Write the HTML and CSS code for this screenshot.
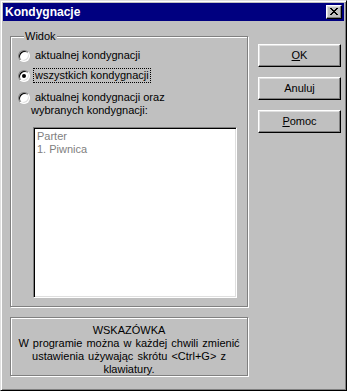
FILE: index.html
```html
<!DOCTYPE html>
<html lang="pl">
<head>
<meta charset="utf-8">
<title>Kondygnacje</title>
<link rel="stylesheet" href="styles.css">
</head>
<body>
<div class="window">
  <div class="titlebar">
    <span class="title">Kondygnacje</span>
    <span class="close"><svg width="8" height="7" viewBox="0 0 8 7"><path d="M0 0h2v1h-2zM6 0h2v1h-2zM1 1h2v1h-2zM5 1h2v1h-2zM2 2h4v1h-4zM3 3h2v1h-2zM2 4h4v1h-4zM1 5h2v1h-2zM5 5h2v1h-2zM0 6h2v1h-2zM6 6h2v1h-2z" fill="#000"/></svg></span>
  </div>
  <div class="body">
    <div class="left">
      <fieldset class="group">
        <legend class="legend">Widok</legend>
        <div class="opt opt1"><span class="radio"></span><span class="txt">aktualnej kondygnacji</span></div>
        <div class="opt opt2"><span class="radio checked"></span><span class="txt focus">wszystkich kondygnacji</span></div>
        <div class="opt opt3"><span class="radio"></span><span class="txt">aktualnej kondygnacji oraz</span></div>
        <div class="sub">wybranych kondygnacji:</div>
        <div class="listbox">
          <div class="item">Parter</div>
          <div class="item">1. Piwnica</div>
        </div>
      </fieldset>
      <div class="hint">WSKAZÓWKA<br>W programie można w każdej chwili zmienić<br>ustawienia używając skrótu &lt;Ctrl+G&gt; z<br>klawiatury.</div>
    </div>
    <div class="buttons">
      <div class="btn"><span class="u">O</span>K</div>
      <div class="btn">Anuluj</div>
      <div class="btn"><span class="u">P</span>omoc</div>
    </div>
  </div>
</div>
</body>
</html>
```
FILE: styles.css
```css
html, body {
  margin: 0;
  padding: 0;
  background: #c0c0c0;
}
body {
  font-family: "Liberation Sans", Arial, sans-serif;
  font-size: 11px;
  line-height: 13px;
  color: #000;
}
.window {
  box-sizing: border-box;
  width: 347px;
  height: 391px;
  background: #c0c0c0;
  border: 1px solid;
  border-color: #dfdfdf #000 #000 #dfdfdf;
  box-shadow: inset 1px 1px #fff, inset -1px -1px #808080;
  padding: 2px;
}
.titlebar {
  height: 18px;
  background: #000080;
  display: flex;
  align-items: center;
  justify-content: space-between;
  padding: 0 2px 0 2px;
}
.title {
  color: #fff;
  font-weight: bold;
  font-size: 12px;
  line-height: 14px;
}
.close {
  box-sizing: border-box;
  width: 16px;
  height: 14px;
  background: #c0c0c0;
  border: 1px solid;
  border-color: #fff #000 #000 #fff;
  box-shadow: inset -1px -1px #808080, inset 1px 1px #dfdfdf;
  display: flex;
  align-items: center;
  justify-content: center;
  padding-bottom: 1px;
  padding-right: 1px;
}
.close svg { display: block; }
.body {
  display: grid;
  grid-template-columns: 238px 83px;
  column-gap: 10px;
  padding: 9px 3px 0 7px;
  align-items: start;
}
.group {
  margin: 0;
  padding: 0 0 8px 7px;
  min-width: 0;
  border: 1px solid #808080;
  box-shadow: inset 1px 1px #fff, 1px 1px 0 #fff;
}
.legend {
  padding: 0 1px;
  margin-left: 6px;
  background: #c0c0c0;
  line-height: 13px;
}
.opt {
  display: flex;
  align-items: center;
  height: 13px;
}
.opt1 { margin-top: 6px; }
.opt2 { margin-top: 7px; }
.opt3 { margin-top: 9px; }
.radio {
  position: relative;
  box-sizing: border-box;
  width: 12px;
  height: 12px;
  border-radius: 50%;
  background: #fff;
  border: 1px solid;
  border-color: #808080 #fff #fff #808080;
  box-shadow: inset 1px 1px #000, inset -1px -1px #dfdfdf;
  margin-right: 4px;
  flex: none;
}
.radio.checked::after {
  content: "";
  position: absolute;
  left: 3px;
  top: 3px;
  width: 4px;
  height: 4px;
  border-radius: 50%;
  background: #000;
}
.txt {
  padding: 0 1px;
}
.focus {
  outline: 1px dotted #000;
}
.sub {
  margin-left: 13px;
}
.listbox {
  box-sizing: border-box;
  margin-top: 10px;
  margin-left: 15px;
  width: 204px;
  height: 171px;
  background: #fff;
  border: 1px solid;
  border-color: #808080 #fff #fff #808080;
  box-shadow: inset 1px 1px #000, inset -1px -1px #dfdfdf;
  padding: 2px 2px 0 3px;
}
.item {
  color: #808080;
}
.hint {
  box-sizing: border-box;
  margin-top: 10px;
  height: 59px;
  border: 1px solid #808080;
  box-shadow: inset 1px 1px #fff, 1px 1px 0 #fff;
  text-align: center;
  padding-top: 6px;
  word-spacing: 1px;
}
.buttons {
  display: flex;
  flex-direction: column;
  gap: 10px;
  padding-top: 14px;
}
.btn {
  box-sizing: border-box;
  height: 23px;
  border: 1px solid;
  border-color: #fff #000 #000 #fff;
  box-shadow: inset -1px -1px #808080, inset 1px 1px #dfdfdf;
  display: flex;
  align-items: center;
  justify-content: center;
  padding-bottom: 1px;
}
.u {
  text-decoration: underline;
}
```
